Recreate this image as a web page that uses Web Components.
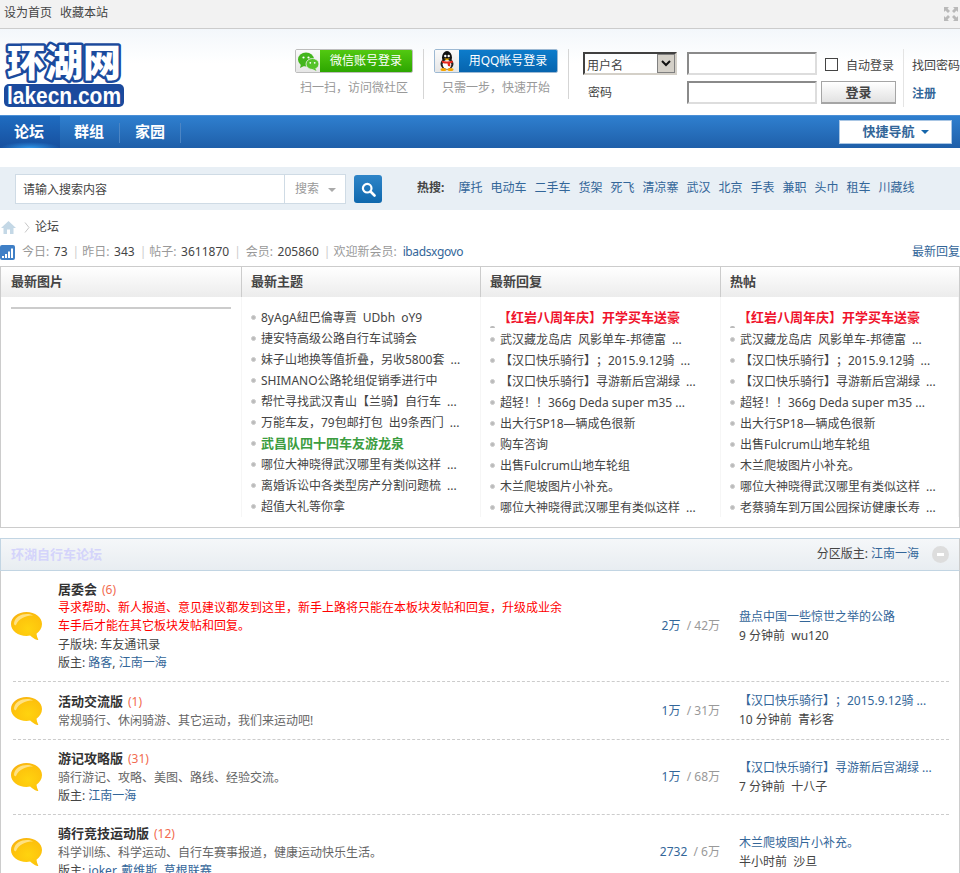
<!DOCTYPE html>
<html lang="zh">
<head>
<meta charset="utf-8">
<title>环湖网</title>
<style>
html, body { margin: 0; height: 873px; overflow: hidden; background: #fff; }
body { font: 12px/18px "Noto Sans", "Noto Sans CJK SC", sans-serif; color: #444; text-spacing-trim: space-all; }
a { color: #369; text-decoration: none; }
lake-forum .line { height: 18px; line-height: 20px; white-space: nowrap; }
lake-forum .desc { color: #666; }
lake-forum .note { color: #f00; width: 510px; }
</style>
</head>
<body>
<lake-topbar><span slot="links">设为首页</span><span slot="links">收藏本站</span></lake-topbar>
<lake-header></lake-header>
<lake-nav><lake-tab active>论坛</lake-tab><lake-tab>群组</lake-tab><lake-tab>家园</lake-tab></lake-nav>
<lake-search>
  <a>摩托</a><a>电动车</a><a>二手车</a><a>货架</a><a>死飞</a><a>清凉寨</a><a>武汉</a><a>北京</a><a>手表</a><a>兼职</a><a>头巾</a><a>租车</a><a>川藏线</a>
</lake-search>
<lake-crumb>论坛</lake-crumb>
<lake-stats></lake-stats>
<lake-panel>
  <lake-col heading="最新图片" first><lake-strip></lake-strip></lake-col>
  <lake-col heading="最新主题">
    <lake-item>8yAgA紐巴倫專賣 UDbh oY9</lake-item>
    <lake-item>捷安特高级公路自行车试骑会</lake-item>
    <lake-item>妹子山地换等值折叠，另收5800套 ...</lake-item>
    <lake-item>SHIMANO公路轮组促销季进行中</lake-item>
    <lake-item>帮忙寻找武汉青山【兰骑】自行车 ...</lake-item>
    <lake-item>万能车友，79包邮打包 出9条西门 ...</lake-item>
    <lake-item tone="green">武昌队四十四车友游龙泉</lake-item>
    <lake-item>哪位大神晓得武汉哪里有类似这样 ...</lake-item>
    <lake-item>离婚诉讼中各类型房产分割问题梳 ...</lake-item>
    <lake-item>超值大礼等你拿</lake-item>
  </lake-col>
  <lake-col heading="最新回复">
    <lake-item tone="red">【红岩八周年庆】开学买车送豪</lake-item>
    <lake-item>武汉藏龙岛店 风影单车-邦德富 ...</lake-item>
    <lake-item>【汉口快乐骑行】；2015.9.12骑 ...</lake-item>
    <lake-item>【汉口快乐骑行】寻游新后宫湖绿 ...</lake-item>
    <lake-item tight>超轻！！366g Deda super m35 ...</lake-item>
    <lake-item>出大行SP18—辆成色很新</lake-item>
    <lake-item>购车咨询</lake-item>
    <lake-item>出售Fulcrum山地车轮组</lake-item>
    <lake-item>木兰爬坡图片小补充。</lake-item>
    <lake-item>哪位大神晓得武汉哪里有类似这样 ...</lake-item>
  </lake-col>
  <lake-col heading="热帖">
    <lake-item tone="red">【红岩八周年庆】开学买车送豪</lake-item>
    <lake-item>武汉藏龙岛店 风影单车-邦德富 ...</lake-item>
    <lake-item>【汉口快乐骑行】；2015.9.12骑 ...</lake-item>
    <lake-item>【汉口快乐骑行】寻游新后宫湖绿 ...</lake-item>
    <lake-item tight>超轻！！366g Deda super m35 ...</lake-item>
    <lake-item>出大行SP18—辆成色很新</lake-item>
    <lake-item>出售Fulcrum山地车轮组</lake-item>
    <lake-item>木兰爬坡图片小补充。</lake-item>
    <lake-item>哪位大神晓得武汉哪里有类似这样 ...</lake-item>
    <lake-item>老蔡骑车到万国公园探访健康长寿 ...</lake-item>
  </lake-col>
</lake-panel>
<lake-forums heading="环湖自行车论坛" mod="江南一海">
  <lake-forum name="居委会" count="6" threads="2万" posts="42万" last="盘点中国一些惊世之举的公路" when="9 分钟前" who="wu120">
    <div class="note">寻求帮助、新人报道、意见建议都发到这里，新手上路将只能在本板块发帖和回复，升级成业余车手后才能在其它板块发帖和回复。</div>
    <div class="line">子版块: 车友通讯录</div>
    <div class="line">版主: <a>路客</a>, <a>江南一海</a></div>
  </lake-forum>
  <lake-forum name="活动交流版" count="1" threads="1万" posts="31万" last="【汉口快乐骑行】；2015.9.12骑 ..." when="10 分钟前" who="青衫客">
    <div class="line desc">常规骑行、休闲骑游、其它运动，我们来运动吧!</div>
  </lake-forum>
  <lake-forum name="游记攻略版" count="31" threads="1万" posts="68万" last="【汉口快乐骑行】寻游新后宫湖绿 ..." when="7 分钟前" who="十八子">
    <div class="line desc">骑行游记、攻略、美图、路线、经验交流。</div>
    <div class="line">版主: <a>江南一海</a></div>
  </lake-forum>
  <lake-forum name="骑行竞技运动版" count="12" threads="2732" posts="6万" last="木兰爬坡图片小补充。" when="半小时前" who="沙旦">
    <div class="line desc">科学训练、科学运动、自行车赛事报道，健康运动快乐生活。</div>
    <div class="line">版主: <a>joker</a>, <a>戴维斯</a>, <a>草根联赛</a></div>
  </lake-forum>
</lake-forums>

<script>
// small base class, every element just supplies css() and template()
class LakeElement extends HTMLElement {
    css = () => '';
    template = () => '<slot></slot>';

    connectedCallback() {
        if(this.shadowRoot) return;
        this.attachShadow({ mode: 'open' });
        this.shadowRoot.innerHTML = `
            <style>${this.css().trim()}</style>
            ${this.template().trim()}
        `;
    }
}

class LakeTopbar extends LakeElement {
    css = () => `
        :host { display: flex; justify-content: space-between; align-items: center; height: 28px; padding: 0 2px 0 4px; background: #f2f2f2; border-bottom: 1px solid #ccc; }
        .links { display: flex; gap: 8px; margin-top: -2px; }
        svg { display: block; margin-top: -1px; }
    `;
    template = () => `
        <div class="links"><slot name="links"></slot></div>
        <svg width="14" height="14" viewBox="0 0 14 14" fill="#b9b9b9">
            <path d="M0 0h5L3.500 1.500 6 4 4 6 1.500 3.500 0 5zM14 0v5l-1.500-1.500L10 6 8 4l2.500-2.500L9 0zM0 14V9l1.500 1.500L4 8l2 2-2.500 2.500L5 14zM14 14H9l1.500-1.500L8 10l2-2 2.500 2.500L14 9z"/>
        </svg>
    `;
}

class LakeSocial extends LakeElement {
    css = () => `
        :host { display: flex; flex-direction: column; align-items: center; width: var(--w); }
        .btn { display: flex; width: 100%; height: 24px; box-sizing: border-box; border-radius: 2px; overflow: hidden; border: 1px solid var(--edge); }
        .ico { width: 24px; background: linear-gradient(#fafafa, #e6e6e6); display: flex; align-items: center; justify-content: center; }
        .txt { flex: 1; color: #fff; text-align: center; line-height: 22px; background: var(--fill); }
        .cap { color: #999; margin-top: 6px; line-height: 18px; white-space: nowrap; }
    `;
    template = () => `
        <div class="btn"><div class="ico"><slot name="icon"></slot></div><div class="txt">${this.getAttribute('label')}</div></div>
        <div class="cap">${this.getAttribute('caption')}</div>
    `;
}

class LakeLogin extends LakeElement {
    css = () => `
        :host { display: grid; grid-template-columns: 94px 130px auto; grid-template-rows: 23px 23px; column-gap: 10px; row-gap: 6px; align-items: center; align-self: flex-start; }
        .sel { height: 23px; box-sizing: border-box; display: flex; border: 2px solid; border-color: #404040 #d4d0c8 #d4d0c8 #404040; }
        .sel span { flex: 1; line-height: 23px; padding-left: 2px; }
        .sel i { width: 18px; background: #d4d0c8; border: 1px solid #808080; box-sizing: border-box; display: flex; align-items: center; justify-content: center; }
        .inp { height: 23px; box-sizing: border-box; border: 2px solid; border-color: #8a8a8a #ddd #ddd #8a8a8a; background: #fff; }
        .pw { padding-left: 5px; }
        .auto { display: flex; align-items: center; margin-left: -2px; padding-top: 4px; }
        .auto b { width: 13px; height: 13px; box-sizing: border-box; border: 1px solid #444; margin: -2px 8px 0 0; }
        .go { width: 75px; height: 23px; box-sizing: border-box; margin-left: -6px; border: 1px solid #a5a5a5; border-width: 1px 1px 2px 1px; background: linear-gradient(#fff, #e2e2e2); text-align: center; font-size: 13px; font-weight: bold; line-height: 21px; }
    `;
    template = () => `
        <div class="sel"><span>用户名</span><i><svg width="10" height="7" viewBox="0 0 10 7"><path d="M1 1l4 4 4-4" fill="none" stroke="#111" stroke-width="2"/></svg></i></div>
        <div class="inp"></div>
        <div class="auto"><b></b>自动登录</div>
        <div class="pw">密码</div>
        <div class="inp"></div>
        <div class="go">登录</div>
    `;
}

class LakeHeader extends LakeElement {
    css = () => `
        :host { display: flex; height: 86px; background: linear-gradient(#f3f7fb, #fff 40%); color: #444; }
        .logo { margin: 10px 0 0 4px; width: 120px; height: 68px; display: block; flex: none; overflow: visible; }
        .sep { width: 1px; background: #d5d5d5; height: 50px; margin-top: 20px; flex: none; }
        lake-social { margin-top: 20px; flex: none; }
        lake-login { margin: 23px 0 0 14px; flex: none; }
        .wx { --w: 118px; --edge: #bdbdbd; --fill: linear-gradient(#52c911, #2da600); margin: 20px 10px 0 171px; }
        .qq { --w: 124px; --edge: #9db9d3; --fill: linear-gradient(#0d7ccb, #0664ae); margin: 20px 10px 0 10px; }
        .more { margin: 20px 0 0 7px; width: 49px; flex: none; border-left: 1px solid #e4e4e4; padding-left: 8px; height: 58px; white-space: nowrap; }
        .more div { line-height: 18px; margin-top: 8px; }
        .more a { color: #369; font-weight: bold; display: block; margin-top: 10px; line-height: 18px; }
    `;
    template = () => `
        <svg class="logo" viewBox="0 0 120 68">
            <rect x="0" y="45" width="120" height="23" rx="5" fill="#1b4a9d"/>
            <text x="60" y="37" text-anchor="middle" font-family="Noto Sans CJK SC" font-weight="900" font-size="38" fill="#fff" stroke="#1b4a9d" stroke-width="5" stroke-linejoin="round" paint-order="stroke">环湖网</text>
            <text x="60" y="65" text-anchor="middle" font-family="Liberation Sans" font-weight="bold" font-size="23" fill="#fff" textLength="114" lengthAdjust="spacingAndGlyphs">lakecn.com</text>
        </svg>
        <lake-social class="wx" label="微信账号登录" caption="扫一扫，访问微社区">
            <svg slot="icon" width="21" height="19" viewBox="0 0 21 19">
                <ellipse cx="8" cy="7.500" rx="8" ry="7" fill="#43b51c"/>
                <path d="M3 12l-1 4 4-2z" fill="#43b51c"/>
                <ellipse cx="14.500" cy="12" rx="6.500" ry="5.500" fill="#55c32a" stroke="#f2f2f2" stroke-width=".8"/>
                <path d="M17 16l1.500 3-4-2z" fill="#55c32a"/>
                <circle cx="5.500" cy="5.500" r="1.100" fill="#fff"/><circle cx="10.500" cy="5.500" r="1.100" fill="#fff"/>
                <circle cx="12.300" cy="10.800" r=".9" fill="#fff"/><circle cx="16.700" cy="10.800" r=".9" fill="#fff"/>
            </svg>
        </lake-social>
        <div class="sep"></div>
        <lake-social class="qq" label="用QQ帐号登录" caption="只需一步，快速开始">
            <svg slot="icon" width="16" height="20" viewBox="0 0 16 20">
                <ellipse cx="8" cy="6.500" rx="5" ry="6.500" fill="#111"/>
                <ellipse cx="8" cy="13" rx="6.500" ry="5.500" fill="#222"/>
                <ellipse cx="8" cy="13.500" rx="4.300" ry="4.500" fill="#fff"/>
                <circle cx="6.300" cy="5" r="1.200" fill="#fff"/><circle cx="9.700" cy="5" r="1.200" fill="#fff"/>
                <path d="M5 7.500h6L8 9.500z" fill="#f5b400"/>
                <path d="M2.500 9.500q5.500 2 11 0l.5 2-3 1 .5 3-2.500-.5-.5-2.500q-2 .3-5-.5z" fill="#e4281c"/>
                <ellipse cx="4.500" cy="18.500" rx="3" ry="1.500" fill="#f5a400"/><ellipse cx="11.500" cy="18.500" rx="3" ry="1.500" fill="#f5a400"/>
            </svg>
        </lake-social>
        <div class="sep"></div>
        <lake-login></lake-login>
        <div class="more"><div>找回密码</div><a>注册</a></div>
    `;
}

class LakeNav extends LakeElement {
    css = () => `
        :host { display: flex; height: 33px; box-sizing: border-box; border-top: 1px solid #4b8fd6; background: linear-gradient(#2f7fcf, #1f5fa9); }
        .quick { margin: 4px 8px 0 auto; width: 113px; height: 24px; padding-bottom: 2px; box-sizing: border-box; background: #fff; border: 1px solid #a9c6e4; display: flex; align-items: center; justify-content: center; gap: 6px; color: #369; font-size: 13px; font-weight: bold; }
        .quick i { width: 0; height: 0; border: 4px solid transparent; border-top-color: #1666ab; border-bottom: 0; margin-top: 2px; }
    `;
    template = () => `<slot></slot><div class="quick">快捷导航<i></i></div>`;
}

class LakeTab extends LakeElement {
    css = () => `
        :host { display: flex; width: 60px; height: 32px; box-sizing: border-box; padding: 0 2px 2px 0; align-items: center; justify-content: center; position: relative; color: #fff; font-size: 15px; font-weight: bold; }
        :host([active]) { background: radial-gradient(ellipse 30px 6px at 50% 100%, #2f95e8, transparent), linear-gradient(#1f6cc0, #17509f); }
        :host(:nth-child(3)) { margin-left: 1px; }
        :host(:not([active]))::after { content: ""; position: absolute; right: 0; top: 7px; height: 20px; width: 1px; background: #4c85c4; }
    `;
}

class LakeSearch extends LakeElement {
    css = () => `
        :host { display: flex; align-items: center; height: 43px; margin-top: 19px; padding-left: 15px; background: #e8eff5; }
        .box { display: flex; width: 331px; height: 30px; box-sizing: border-box; background: #fff; border: 1px solid #cfdbe5; line-height: 28px; margin-top: 1px; }
        .q { width: 261px; height: 28px; line-height: 30px; padding-left: 7px; border-right: 1px solid #cfdbe5; box-sizing: content-box; }
        .kind { display: flex; align-items: center; color: #999; padding-left: 10px; gap: 9px; }
        .kind i { width: 0; height: 0; border: 4px solid transparent; border-top-color: #aaa; border-bottom: 0; margin-top: 1px; }
        .btn { width: 28px; height: 28px; margin: 1px 35px 0 8px; border-radius: 3px; background: linear-gradient(#2f85c8, #0f68ad); display: flex; align-items: center; justify-content: center; }
        b { margin-right: 14px; margin-top: -2px; }
        .hot { display: flex; gap: 8px; margin-top: -2px; }
    `;
    template = () => `
        <div class="box"><div class="q">请输入搜索内容</div><div class="kind">搜索<i></i></div></div>
        <div class="btn"><svg width="15" height="15" viewBox="0 0 15 15"><circle cx="6.200" cy="6.200" r="4.300" fill="none" stroke="#fff" stroke-width="2.200"/><path d="M9.500 9.500l4 4" stroke="#fff" stroke-width="2.600" stroke-linecap="round"/></svg></div>
        <b>热搜:</b>
        <div class="hot"><slot></slot></div>
    `;
}

class LakeCrumb extends LakeElement {
    css = () => `
        :host { display: flex; align-items: center; height: 18px; margin-top: 8px; padding-left: 1px; }
        svg { display: block; }
        .home { margin-right: 8px; }
        .arr { margin-right: 5px; }
    `;
    template = () => `
        <svg class="home" width="15" height="13" viewBox="0 0 15 13" fill="#c4d8e6"><path d="M7.500 0L15 7h-2.500v6H9V8.500H6V13H2.500V7H0z"/></svg>
        <svg class="arr" width="6" height="11" viewBox="0 0 6 11"><path d="M1 .5l4 5-4 5" fill="none" stroke="#c6c6c6"/></svg>
        <slot></slot>
    `;
}

class LakeStats extends LakeElement {
    css = () => `
        :host { display: flex; align-items: center; height: 18px; margin-top: 7px; color: #999; white-space: nowrap; }
        svg { display: block; margin-right: 7px; }
        em { font-style: normal; color: #444; margin-left: 1.500px; }
        i { font-style: normal; color: #ccc; margin: 0 3px 0 5px; }
        i.wide { margin-right: 5px; }
        a { color: #369; }
        .who { margin-left: 6px; letter-spacing: -.4px; }
        .more { margin-left: auto; }
    `;
    template = () => `
        <svg width="15" height="15" viewBox="0 0 15 15"><rect width="15" height="15" rx="2" fill="#3f7fc6"/><path d="M2 11h2v2H2zM5 9h2v4H5zM8 6.500h2V13H8zM11 3.500h2V13h-2z" fill="#fff"/></svg>
        今日: <em>&nbsp;73</em><i>|</i>昨日: <em>&nbsp;343</em><i>|</i>帖子: <em>&nbsp;3611870</em><i class="wide">|</i>会员: <em>&nbsp;205860</em><i>|</i>欢迎新会员:<a class="who">ibadsxgovo</a>
        <a class="more">最新回复</a>
    `;
}

class LakePanel extends LakeElement {
    css = () => `
        :host { display: grid; grid-template-columns: 241px 239px 240px 238px; height: 262px; box-sizing: border-box; margin-top: 5px; border: 1px solid #ccc; }
    `;
}

class LakeCol extends LakeElement {
    css = () => `
        :host { display: block; overflow: hidden; }
        h3 { margin: 0; height: 30px; box-sizing: border-box; padding-left: 9px; background: linear-gradient(#fff, #ececec); border-right: 1px solid #ccc; font-size: 13px; font-weight: bold; line-height: 28px; color: #444; }
        :host([first]) h3 { padding-left: 10px; }
        :host(:last-child) h3 { border-right: 0; }
        .body { padding: 10px 0 0 9px; height: 220px; box-sizing: border-box; border-right: 1px solid #f6f6f6; }
    `;
    template = () => `<h3>${this.getAttribute('heading')}</h3><div class="body"><slot></slot></div>`;
}

class LakeStrip extends LakeElement {
    css = () => `:host { display: block; height: 2px; width: 220px; margin-left: 1px; background: #ccc; }`;
    template = () => ``;
}

class LakeItem extends LakeElement {
    css = () => `
        :host { display: flex; align-items: center; height: 21px; line-height: 21px; white-space: nowrap; word-spacing: 3px; color: #444; }
        :host([tight]) { word-spacing: 0; }
        i { width: 5px; height: 5px; box-sizing: border-box; border-radius: 50%; background: #bbb; border: 1px solid #ccc; margin-right: 5px; flex: none; }
        :host([tone="green"]) { color: #3c9d40; font-size: 13px; font-weight: bold; }
        :host([tone="red"]) { color: #f0142d; font-size: 13px; font-weight: bold; height: 22px; align-items: flex-start; }
        :host([tone="red"]) i { height: 2px; border: 0; border-radius: 3px 3px 0 0; margin: 19px 3px 0 0; }
    `;
    template = () => `<i></i><slot></slot>`;
}

class LakeForums extends LakeElement {
    css = () => `
        :host { display: block; margin-top: 10px; border-right: 1px solid #ccc; border-left: 1px solid #ccc; }
        .head { display: flex; align-items: center; height: 33px; box-sizing: border-box; margin: 0 -1px; padding: 0 10px 2px 10px; border: 1px solid #c2d5e3; border-right-color: #ccc; background: linear-gradient(#f5f7f9, #e8edf1); }
        h2 { margin: 0; font-size: 13px; font-weight: bold; color: #d4d4fb; }
        .mod { margin-left: auto; margin-right: 13px; }
        a { color: #369; }
        .fold { width: 17px; height: 17px; margin-top: 2px; border-radius: 50%; background: #ddd; display: flex; align-items: center; justify-content: center; }
        .fold i { width: 7px; height: 3px; background: #fff; }
    `;
    template = () => `
        <div class="head">
            <h2>${this.getAttribute('heading')}</h2>
            <div class="mod">分区版主: <a>${this.getAttribute('mod')}</a></div>
            <div class="fold"><i></i></div>
        </div>
        <slot></slot>
    `;
}

class LakeForum extends LakeElement {
    css = () => `
        :host { display: flex; align-items: center; margin: 0 10px 0 12px; padding: 10px 0; border-bottom: 1px dashed #ccc; }
        svg { display: block; margin-left: -2px; flex: none; }
        .main { width: 510px; margin-left: 16px; flex: none; }
        .name { height: 18px; line-height: 16px; font-size: 13px; font-weight: bold; color: #333; }
        .name span { font-weight: normal; color: #f26c4f; margin-left: 5px; font-size: 12px; }
        .nums { width: 152px; text-align: right; color: #999; flex: none; }
        .nums em { font-style: normal; color: #369; }
        .last { margin-left: 19px; white-space: nowrap; }
        .last a { color: #369; display: block; height: 19px; }
    `;
    template = () => `
        <svg width="31" height="28" viewBox="0 0 31 28">
            <defs>
                <radialGradient id="g" cx=".55" cy=".6" r=".7"><stop offset="0" stop-color="#ffd30f"/><stop offset=".75" stop-color="#fdc00c"/><stop offset="1" stop-color="#f2a516"/></radialGradient>
            </defs>
            <path d="M15.500 0C24 0 31 5 31 12c0 4-2.300 7.500-5.500 9.700.2 2 .8 4 1.700 5.800.2.500-.3.700-.8.500-3-1-5.500-2.700-7.300-4.500-1.200.3-2.300.4-3.600.4C7 23.900 0 18.800 0 12 0 5 7 0 15.500 0z" fill="url(#g)"/>
            <path d="M3 11C4 5 10 2 16 2c3 0 5 .6 6 1.500C15 3.500 8 6 5 13c-1 .5-2 0-2-2z" fill="#ffe9a0" opacity=".8"/>
        </svg>
        <div class="main">
            <div class="name">${this.getAttribute('name')}<span>(${this.getAttribute('count')})</span></div>
            <slot></slot>
        </div>
        <div class="nums"><em>${this.getAttribute('threads')}</em> &nbsp;/ ${this.getAttribute('posts')}</div>
        <div class="last"><a>${this.getAttribute('last')}</a>${this.getAttribute('when')} &nbsp;${this.getAttribute('who')}</div>
    `;
}

customElements.define('lake-topbar', LakeTopbar);
customElements.define('lake-social', LakeSocial);
customElements.define('lake-login', LakeLogin);
customElements.define('lake-header', LakeHeader);
customElements.define('lake-nav', LakeNav);
customElements.define('lake-tab', LakeTab);
customElements.define('lake-search', LakeSearch);
customElements.define('lake-crumb', LakeCrumb);
customElements.define('lake-stats', LakeStats);
customElements.define('lake-panel', LakePanel);
customElements.define('lake-col', LakeCol);
customElements.define('lake-strip', LakeStrip);
customElements.define('lake-item', LakeItem);
customElements.define('lake-forums', LakeForums);
customElements.define('lake-forum', LakeForum);
</script>
</body>
</html>
